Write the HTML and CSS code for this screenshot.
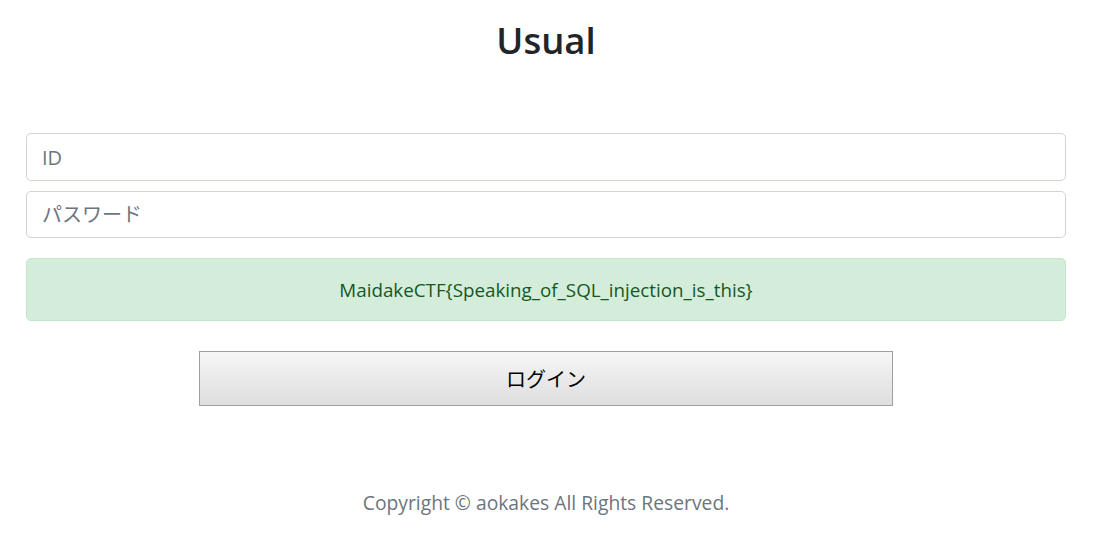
FILE: index.html
```html
<!DOCTYPE html>
<html lang="ja">
<head>
<meta charset="utf-8">
<title>Usual</title>
<link rel="stylesheet" href="styles.css">
</head>
<body>
<div class="page">
  <h1 class="title">Usual</h1>
  <form class="login">
    <input class="field" type="text" placeholder="ID">
    <input class="field" type="password" placeholder="パスワード">
    <div class="alert">MaidakeCTF{Speaking_of_SQL_injection_is_this}</div>
    <div class="btn-row"><button class="btn" type="button">ログイン</button></div>
  </form>
  <footer class="footer">Copyright © aokakes All Rights Reserved.</footer>
</div>
</body>
</html>
```
FILE: styles.css
```css
* { box-sizing: border-box; }
html, body { margin: 0; padding: 0; background: #fff; }
body {
  font-family: "Open Sans", "Noto Sans CJK JP", sans-serif;
  color: #212529;
}
.page {
  padding: 0 32px 0 26px;
  display: flex;
  flex-direction: column;
}
.title {
  margin: 16px 0 0;
  text-align: center;
  font-size: 36.5px;
  font-weight: 600;
  line-height: 48px;
  color: #212529;
}
.login {
  margin-top: 69px;
  display: flex;
  flex-direction: column;
}
.field {
  display: block;
  width: 100%;
  height: 48px;
  padding: 0 15px;
  font-family: "Open Sans", "Noto Sans CJK JP", sans-serif;
  font-size: 20px;
  color: #495057;
  border: 1px solid #ced4da;
  border-radius: 5px;
  background: #fff;
  margin-bottom: 10px;
}
.field:last-of-type { height: 47px; }
.field::placeholder { color: #6c757d; }
.alert {
  margin-top: 10px;
  height: 63px;
  display: flex;
  align-items: center;
  justify-content: center;
  font-size: 18.8px;
  color: #155724;
  background: #d4edda;
  border: 1px solid #c3e6cb;
  border-radius: 5px;
}
.btn-row {
  margin-top: 30px;
  display: flex;
  justify-content: center;
}
.btn {
  width: 694px;
  height: 55px;
  font-family: "Noto Sans CJK JP", sans-serif;
  font-size: 20px;
  color: #000;
  border: 1px solid #a0a0a0;
  border-radius: 0;
  background: linear-gradient(#f6f6f6, #dedede);
}
.footer {
  margin-top: 82px;
  text-align: center;
  font-size: 19.3px;
  line-height: 30px;
  color: #6c757d;
}
```
